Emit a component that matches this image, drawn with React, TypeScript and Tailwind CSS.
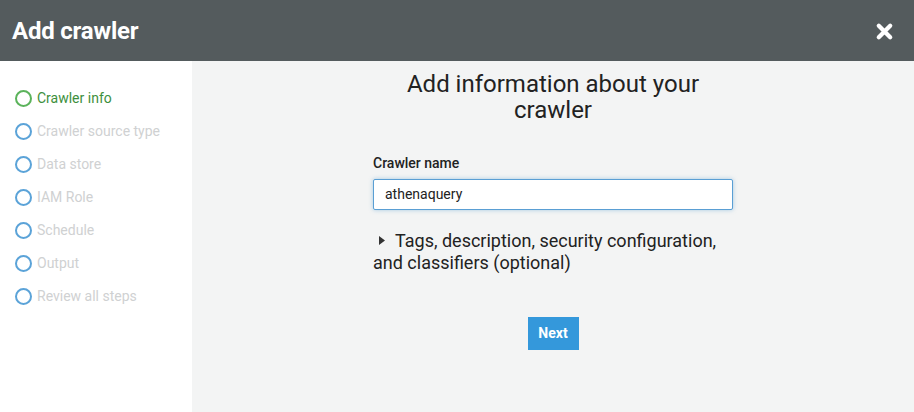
import React from "react";

const steps = [
  "Crawler info",
  "Crawler source type",
  "Data store",
  "IAM Role",
  "Schedule",
  "Output",
  "Review all steps",
];

export default function App() {
  return (
    <div className="w-[914px] h-[412px] flex flex-col overflow-hidden" style={{ fontFamily: "Roboto, 'Liberation Sans', sans-serif" }}>
      <div className="h-[61px] bg-[#545b5d] flex items-center justify-between pl-[12px] pr-[20px] shrink-0">
        <h1 className="text-white text-[24px] font-bold tracking-[-0.2px] mt-[1px]">Add crawler</h1>
        <svg width="19" height="19" viewBox="0 0 20 20" className="mt-[1px]">
          <path d="M4 4 L16 16 M16 4 L4 16" stroke="white" strokeWidth="4.5" strokeLinecap="round" />
        </svg>
      </div>
      <div className="flex flex-1">
        <div className="w-[192px] bg-white pt-[27px] pl-[15px] flex flex-col gap-[13px]">
          {steps.map((s, i) => (
            <div key={s} className="flex items-center gap-[5px] h-[20px]">
              <span
                className={`w-[17px] h-[17px] rounded-full border-2 ${i === 0 ? "border-[#5bb35b]" : "border-[#5ba3d8]"}`}
              />
              <span className={`text-[14px] ${i === 0 ? "text-[#3d8f3d]" : "text-[#cfd1d2]"}`}>{s}</span>
            </div>
          ))}
        </div>
        <div className="flex-1 bg-[#f3f4f4] flex justify-center">
          <div className="w-[360px] pt-[10px] flex flex-col">
            <h2 className="text-[24px] leading-[26px] text-[#222] text-center px-[10px]">Add information about your crawler</h2>
            <label className="mt-[31px] text-[14px] font-medium text-[#222] leading-[18px]">Crawler name</label>
            <div className="mt-[7px] h-[31px] bg-white border border-[#5a9fd4] rounded-[2px] shadow-[0_0_4px_rgba(90,159,212,0.5)] flex items-center pl-[11px] text-[14px] text-[#222]">
              athenaquery
            </div>
            <div className="mt-[20px] text-[18px] leading-[22px] text-[#222]">
              <svg width="6" height="9" viewBox="0 0 6 9" className="inline-block ml-[6px] mr-[10px] mb-[3px]">
                <path d="M0 0 L6 4.5 L0 9 Z" fill="#333" />
              </svg>
              Tags, description, security configuration, and classifiers (optional)
            </div>
            <div className="mt-[43px] flex justify-center">
              <button className="h-[33px] w-[51px] bg-[#3498db] text-white text-[14px] font-bold">Next</button>
            </div>
          </div>
        </div>
      </div>
    </div>
  );
}
